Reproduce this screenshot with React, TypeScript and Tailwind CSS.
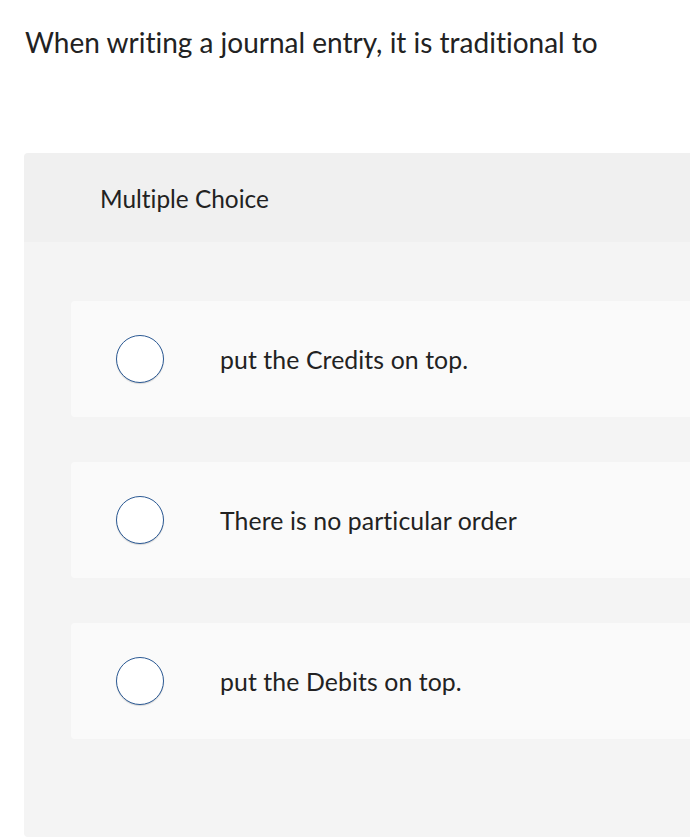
export default function App() {
  const options = ["put the Credits on top.", "There is no particular order", "put the Debits on top."];

  return (
    <div className="w-[690px] h-[840px] overflow-hidden bg-white text-[#222222] font-['Lato','Liberation_Sans',sans-serif] [font-variant-ligatures:none]">
      <h1 className="pl-[25px] pt-[24px] text-[28px] leading-[36px] font-normal">
        When writing a journal entry, it is traditional to
      </h1>

      <div className="ml-[24px] mt-[93px] w-[700px] rounded-l-[4px] overflow-hidden">
        <div className="h-[89px] bg-[#f0f0f0] flex items-center pl-[76px] pt-[3px]">
          <span className="text-[24.4px] leading-none">Multiple Choice</span>
        </div>

        <div className="bg-[#f4f4f4] pt-[59px] pb-[98px] pl-[47px] flex flex-col gap-[45px]">
          {options.map((text) => (
            <div key={text} className="h-[116px] bg-[#fafafa] rounded-l-[4px] flex items-center pl-[45px]">
              <span className="w-[48px] h-[48px] rounded-full bg-white border border-[#2c5a94] shadow-[0_1px_1px_rgba(0,0,0,0.15)] shrink-0" />
              <span className="ml-[56px] pt-[2px] text-[24.8px] leading-none tracking-[0.1px]">{text}</span>
            </div>
          ))}
        </div>
      </div>
    </div>
  );
}
